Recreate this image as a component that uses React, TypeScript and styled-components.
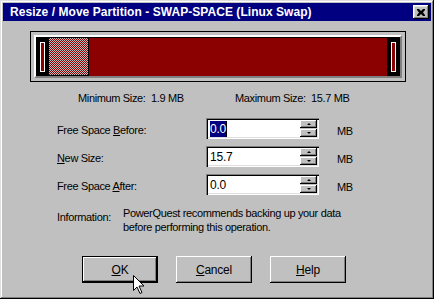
import React from "react";
import styled, { createGlobalStyle } from "styled-components";

const GlobalStyle = createGlobalStyle`
  html, body {
    margin: 0;
    padding: 0;
    background: #c0c0c0;
  }
  body {
    font-family: "Liberation Sans", Arial, sans-serif;
    font-size: 11px;
    letter-spacing: -0.35px;
    color: #000;
  }
`;

const RED = "#8b0000";
const FACE = "#c0c0c0";

const Window = styled.div`
  position: relative;
  width: 434px;
  height: 299px;
  box-sizing: border-box;
  padding: 3px;
  background: ${FACE};
  box-shadow: inset -1px -1px #000, inset 1px 1px #dfdfdf,
    inset -2px -2px #808080, inset 2px 2px #fff;
  overflow: hidden;
`;

const TitleBar = styled.div`
  height: 18px;
  background: #000080;
  color: #fff;
  display: flex;
  align-items: center;
  justify-content: space-between;
  padding: 0 2px 0 7px;
  font-weight: bold;
  font-size: 12px;
  letter-spacing: 0.05px;
`;

const CloseButton = styled.div`
  width: 16px;
  height: 14px;
  box-sizing: border-box;
  background: ${FACE};
  box-shadow: inset -1px -1px #000, inset 1px 1px #fff,
    inset -2px -2px #808080, inset 2px 2px #dfdfdf;
  display: flex;
  align-items: center;
  justify-content: center;
`;

const Body = styled.div`
  padding: 10px 0 0 27px;
`;

const BarFrame = styled.div`
  width: 376px;
  height: 51px;
  box-sizing: border-box;
  border: 1px solid #000;
  padding: 3px;
`;

const Well = styled.div`
  height: 100%;
  box-sizing: border-box;
  border-top: 2px solid #fff;
  border-left: 2px solid #fff;
  border-bottom: 2px solid #808080;
  border-right: 2px solid #808080;
  background: #000;
  padding-top: 1px;
  display: flex;
`;

const HandleZone = styled.div`
  width: 13px;
  background: #000;
  display: flex;
  align-items: flex-start;
  justify-content: center;
  padding-top: 4px;
`;

const Handle = styled.div`
  width: 5px;
  height: 30px;
  box-sizing: border-box;
  border: 1px solid #fff;
  background: ${RED};
`;

const Hatched = styled.div`
  width: 40px;
  box-sizing: border-box;
  border-right: 1px solid #000;
  border-bottom: 1px solid #000;
  overflow: hidden;
  svg {
    display: block;
  }
`;

const Fill = styled.div`
  flex: 1;
  background: ${RED};
`;

const SizeRow = styled.div`
  display: flex;
  margin-top: 9px;
  padding-left: 75px;
  height: 14px;
  align-items: center;
`;

const SizeText = styled.span<{ $w: number }>`
  width: ${(p) => p.$w}px;
  white-space: pre;
`;

const Form = styled.div`
  display: grid;
  grid-template-columns: 131px 113px auto;
  column-gap: 18px;
  row-gap: 7px;
  margin: 13px 0 0 54px;
  align-items: center;
`;

const Label = styled.span`
  margin-top: 2px;
`;

const Unit = styled.span`
  margin-top: 4px;
`;

const Field = styled.div`
  height: 21px;
  box-sizing: border-box;
  background: #fff;
  box-shadow: inset 1px 1px #808080, inset 2px 2px #000,
    inset -1px -1px #fff, inset -2px -2px #dfdfdf;
  display: flex;
  align-items: stretch;
  padding: 2px;
`;

const FieldText = styled.div`
  flex: 1;
  display: flex;
  align-items: center;
  padding-left: 2px;
  font-size: 12px;
  letter-spacing: -0.2px;
`;

const Selected = styled.span`
  background: #000080;
  color: #fff;
  padding: 1px 0;
  border-right: 1px solid #000;
`;

const Spinner = styled.div`
  width: 17px;
  display: flex;
  flex-direction: column;
  gap: 1px;
  background: ${FACE};
`;

const SpinButton = styled.div`
  flex: 1;
  background: ${FACE};
  box-shadow: inset -1px -1px #000, inset 1px 1px #fff,
    inset -2px -2px #808080;
  display: flex;
  align-items: center;
  justify-content: center;
`;

const Arrow = styled.div<{ $up?: boolean }>`
  width: 0;
  height: 0;
  border-left: 2px solid transparent;
  border-right: 2px solid transparent;
  ${(p) =>
    p.$up ? "border-bottom: 2px solid #000;" : "border-top: 2px solid #000;"}
`;

const Info = styled.div`
  display: flex;
  margin: 11px 0 0 54px;
  line-height: 14px;
`;

const InfoLabel = styled.span`
  width: 66px;
  padding-top: 4px;
`;

const Buttons = styled.div`
  display: flex;
  gap: 18px;
  margin: 22px 0 0 79px;
`;

const Button = styled.div<{ $default?: boolean }>`
  width: 76px;
  height: 27px;
  box-sizing: border-box;
  background: ${FACE};
  display: flex;
  align-items: center;
  justify-content: center;
  font-size: 12px;
  letter-spacing: -0.2px;
  box-shadow: ${(p) =>
    p.$default
      ? "inset -1px -1px #000, inset 1px 1px #000, inset -2px -2px #000, inset 2px 2px #fff, inset -3px -3px #808080"
      : "inset -1px -1px #000, inset 1px 1px #fff, inset -2px -2px #808080"};
`;

const Cursor = styled.svg`
  position: absolute;
  left: 133px;
  top: 275px;
`;

function SpinField({ value, selected }: { value: string; selected?: boolean }) {
  return (
    <Field>
      <FieldText>{selected ? <Selected>{value}</Selected> : value}</FieldText>
      <Spinner>
        <SpinButton>
          <Arrow $up />
        </SpinButton>
        <SpinButton>
          <Arrow />
        </SpinButton>
      </Spinner>
    </Field>
  );
}

function Checker() {
  return (
    <svg width="40" height="40" shapeRendering="crispEdges">
      <defs>
        <pattern id="dither" width="2" height="2" patternUnits="userSpaceOnUse">
          <rect width="2" height="2" fill={FACE} />
          <rect width="1" height="1" fill={RED} />
          <rect x="1" y="1" width="1" height="1" fill={RED} />
        </pattern>
      </defs>
      <rect width="40" height="40" fill="url(#dither)" />
    </svg>
  );
}

export default function App() {
  return (
    <>
      <GlobalStyle />
      <Window>
        <TitleBar>
          <span>Resize / Move Partition - SWAP-SPACE (Linux Swap)</span>
          <CloseButton>
            <svg width="8" height="7" viewBox="0 0 8 7">
              <path d="M0 0h2l2 2 2-2h2v1L6 3.5 8 6v1H6L4 5 2 7H0V6l2-2.5L0 1z" fill="#000" />
            </svg>
          </CloseButton>
        </TitleBar>
        <Body>
          <BarFrame>
            <Well>
              <HandleZone>
                <Handle />
              </HandleZone>
              <Hatched>
                <Checker />
              </Hatched>
              <Fill />
              <HandleZone>
                <Handle />
              </HandleZone>
            </Well>
          </BarFrame>
        </Body>
        <SizeRow>
          <SizeText $w={157}>Minimum Size:  1.9 MB</SizeText>
          <SizeText $w={120}>Maximum Size:  15.7 MB</SizeText>
        </SizeRow>
        <Form>
          <Label>
            Free Space <u>B</u>efore:
          </Label>
          <SpinField value="0.0" selected />
          <Unit>MB</Unit>
          <Label>
            <u>N</u>ew Size:
          </Label>
          <SpinField value="15.7" />
          <Unit>MB</Unit>
          <Label>
            Free Space <u>A</u>fter:
          </Label>
          <SpinField value="0.0" />
          <Unit>MB</Unit>
        </Form>
        <Info>
          <InfoLabel>Information:</InfoLabel>
          <span>
            PowerQuest recommends backing up your data
            <br />
            before performing this operation.
          </span>
        </Info>
        <Buttons>
          <Button $default>
            <u>O</u>K
          </Button>
          <Button>
            <u>C</u>ancel
          </Button>
          <Button>
            <u>H</u>elp
          </Button>
        </Buttons>
        <Cursor width="12" height="20" viewBox="0 0 12 20">
          <path
            d="M0.5 0.5v15l3.5-3.5 3 6.5 2-1-3-6.5h5z"
            fill="#fff"
            stroke="#000"
            strokeWidth="1"
          />
        </Cursor>
      </Window>
    </>
  );
}
